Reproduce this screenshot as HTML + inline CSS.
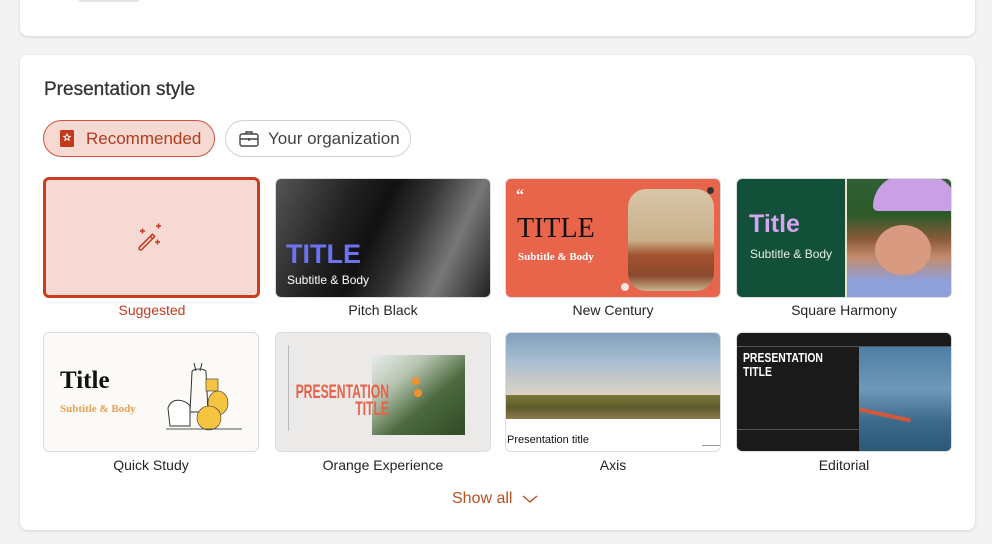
<!DOCTYPE html>
<html><head><meta charset="utf-8"><style>
*{box-sizing:border-box;margin:0;padding:0}
body{width:992px;height:544px;background:#f3f3f3;font-family:"Liberation Sans","DejaVu Sans",sans-serif;position:relative;overflow:hidden;color:#242424}
.card{position:absolute;left:20px;width:955px;background:#fff;border-radius:8px;box-shadow:0 1px 3px rgba(0,0,0,.13)}
.h{position:absolute;left:44px;top:79px;font-size:19px;color:#333;-webkit-text-stroke:.3px #333}
.pill{position:absolute;top:120px;height:37px;border-radius:19px;font-size:17px;display:flex;align-items:center}
.t{position:absolute;width:216px;height:120px;border-radius:6px;overflow:hidden;border:1px solid #ddd}
.l{position:absolute;width:216px;text-align:center;font-size:14px;color:#242424}
</style></head><body>
<div class="card" style="top:-10px;height:46px"></div>
<div style="position:absolute;left:78px;top:-4px;width:62px;height:6px;background:#e6e6e6;border-radius:3px"></div>
<div class="card" style="top:55px;height:475px"></div>
<div class="h">Presentation style</div>
<div class="pill" style="left:43px;width:172px;background:#f6d9d2;border:1px solid #d2543a;color:#b53a1c">
 <svg style="margin-left:15px" width="17" height="20" viewBox="0 0 17 20"><rect x="1" y="1" width="14" height="17" rx="1.5" fill="#c2391c"/><path d="M8 5l1 2.2 2.3.2-1.8 1.5.6 2.3L8 10l-2.1 1.2.6-2.3-1.8-1.5 2.3-.2z" fill="none" stroke="#fff" stroke-width="1"/></svg>
 <span style="margin-left:10px">Recommended</span></div>
<div class="pill" style="left:225px;width:186px;border:1px solid #d1d1d1;color:#424242">
 <svg style="margin-left:13px" width="20" height="18" viewBox="0 0 20 18"><rect x="1" y="4" width="18" height="12" rx="2" fill="none" stroke="#424242" stroke-width="1.4"/><path d="M7 4V2h6v2M1 9h18M10 8v3" fill="none" stroke="#424242" stroke-width="1.4"/></svg>
 <span style="margin-left:9px">Your organization</span></div>

<div class="t" style="left:43px;top:177px;height:121px;width:217px;background:#f6d9d2;border:3px solid #c83e1f"><svg style="position:absolute;left:90px;top:43px" width="30" height="30" viewBox="0 0 30 30"><path d="M3.5 26.5a1.6 1.6 0 0 1 0-2.3l13-13 2.3 2.3-13 13a1.6 1.6 0 0 1-2.3 0z" fill="none" stroke="#c2391c" stroke-width="1.5" stroke-linejoin="round"/><path d="M14.5 13.5l2.3 2.3" stroke="#c2391c" stroke-width="1.5"/><path d="M4 8h5M6.5 5.5v5M20 3h5M22.5 0.5v5M19 19h5M21.5 16.5v5" stroke="#c2391c" stroke-width="1.5"/></svg></div>
<div class="l" style="left:44px;top:302px;color:#c2391c">Suggested</div>

<div class="t" style="left:275px;top:178px;background:linear-gradient(115deg,#555 0%,#222 30%,#111 45%,#333 60%,#777 78%,#222 100%)"><div style="position:absolute;left:10px;top:60px;font:bold 27px 'Liberation Sans';color:#6d72f2">TITLE</div><div style="position:absolute;left:11px;top:94px;font-size:12px;color:#fff">Subtitle &amp; Body</div></div>
<div class="l" style="left:275px;top:302px">Pitch Black</div>

<div class="t" style="left:505px;top:178px;background:#e8644a"><div style="position:absolute;left:10px;top:8px;font:bold 16px 'Liberation Serif';color:#fff">“</div><div style="position:absolute;left:11px;top:34px;font:28px 'Liberation Serif';color:#111">TITLE</div><div style="position:absolute;left:12px;top:72px;font:bold 11px 'Liberation Serif';color:#fff">Subtitle &amp; Body</div><div style="position:absolute;left:122px;top:10px;width:86px;height:102px;border-radius:18px;background:linear-gradient(180deg,#d8c6a8 0%,#c9b08a 50%,#a3522f 65%,#8a4a2e 85%,#c9b590 100%)"></div><div style="position:absolute;left:201px;top:8px;width:7px;height:7px;border-radius:50%;background:#333"></div><div style="position:absolute;left:115px;top:104px;width:8px;height:8px;border-radius:50%;background:#fbe7df"></div></div>
<div class="l" style="left:505px;top:302px">New Century</div>

<div class="t" style="left:736px;top:178px;background:#13503a"><div style="position:absolute;left:12px;top:31px;font:bold 25px 'Liberation Sans';color:#d6a4f2">Title</div><div style="position:absolute;left:13px;top:68px;font-size:12px;color:#e6efe9">Subtitle &amp; Body</div><div style="position:absolute;left:108px;top:0;width:2px;height:120px;background:#e8e2d0"></div><div style="position:absolute;left:110px;top:0;width:106px;height:120px;background:linear-gradient(180deg,#2f5f33 0%,#2d5a2a 30%,#8a5a3a 50%,#c48b6c 65%,#8e9fda 85%,#8e9fda 100%)"><div style="position:absolute;left:26px;top:-4px;width:84px;height:36px;border-radius:40px 40px 6px 6px;background:#c9a0e6"></div><div style="position:absolute;left:28px;top:46px;width:56px;height:50px;border-radius:50%;background:#d89a80"></div></div></div>
<div class="l" style="left:736px;top:302px">Square Harmony</div>

<div class="t" style="left:43px;top:332px;background:#fcfaf6"><div style="position:absolute;left:16px;top:34px;font:bold 25px 'Liberation Serif';color:#111">Title</div><div style="position:absolute;left:16px;top:70px;font:bold 11px 'Liberation Serif';color:#e8a154">Subtitle &amp; Body</div><svg style="position:absolute;left:120px;top:25px" width="80" height="75"><path d="M30 5l2 8M38 5l-2 8M28 14c0-4 14-4 14 0l2 40H26z" fill="none" stroke="#333"/><rect x="42" y="21" width="12" height="12" fill="#f5c542" stroke="#333" stroke-width=".6"/><ellipse cx="54" cy="45" rx="10" ry="12" fill="#f5c542" stroke="#333" stroke-width=".6"/><circle cx="45" cy="60" r="12" fill="#f5c542" stroke="#333" stroke-width=".6"/><path d="M4 50c4-12 18-8 22-2v20H6z" fill="#fff" stroke="#333"/><path d="M2 71h76" stroke="#555"/></svg></div>
<div class="l" style="left:43px;top:457px">Quick Study</div>

<div class="t" style="left:275px;top:332px;background:#ebeae8"><div style="position:absolute;left:12px;top:12px;width:1px;height:86px;background:#bbb"></div><div style="position:absolute;left:96px;top:22px;width:93px;height:80px;background:linear-gradient(140deg,#e8ecec 0%,#b6c4b0 30%,#4d6a3e 60%,#2f4a25 100%)"><div style="position:absolute;left:40px;top:22px;width:8px;height:8px;border-radius:50%;background:#f0902e"></div><div style="position:absolute;left:42px;top:34px;width:8px;height:8px;border-radius:50%;background:#f0902e"></div></div><div style="position:absolute;right:101px;top:51px;font:bold 19px 'Liberation Sans';color:#e8624a;line-height:17px;text-align:right;transform:scaleX(.64);transform-origin:right;white-space:nowrap">PRESENTATION<br>TITLE</div></div>
<div class="l" style="left:275px;top:457px">Orange Experience</div>

<div class="t" style="left:505px;top:332px;background:#fff"><div style="position:absolute;left:0;top:0;width:216px;height:62px;background:linear-gradient(180deg,#7f9fbd 0%,#a8bdd1 45%,#dcd3c3 100%)"></div><div style="position:absolute;left:0;top:62px;width:216px;height:24px;background:linear-gradient(180deg,#7d7a3a,#5d5a2a 50%,#8b7a50)"></div><div style="position:absolute;left:1px;top:101px;font-size:11px;color:#111">Presentation title</div><div style="position:absolute;left:196px;top:112px;width:18px;height:1px;background:#999"></div></div>
<div class="l" style="left:505px;top:457px">Axis</div>

<div class="t" style="left:736px;top:332px;background:#1a1a1a"><div style="position:absolute;left:0;top:13px;width:216px;height:1px;background:#555"></div><div style="position:absolute;left:6px;top:18px;font:bold 13px 'Liberation Sans';color:#fff;line-height:14px;transform:scaleX(.8);transform-origin:left">PRESENTATION<br>TITLE</div><div style="position:absolute;left:0;top:96px;width:122px;height:1px;background:#555"></div><div style="position:absolute;left:122px;top:14px;width:94px;height:106px;background:linear-gradient(180deg,#4e7fa6 0%,#6f98b8 40%,#3d6a8c 70%,#2b5775 100%)"><div style="position:absolute;left:0;top:66px;width:52px;height:4px;background:#d2583a;transform:rotate(12deg)"></div></div></div>
<div class="l" style="left:736px;top:457px">Editorial</div>

<div style="position:absolute;left:452px;top:490px;font-size:16px;color:#b5501f">Show all</div>
<svg style="position:absolute;left:522px;top:493px" width="16" height="12"><path d="M1 3l7 6 7-6" fill="none" stroke="#b5501f" stroke-width="1.4"/></svg>
</body></html>
